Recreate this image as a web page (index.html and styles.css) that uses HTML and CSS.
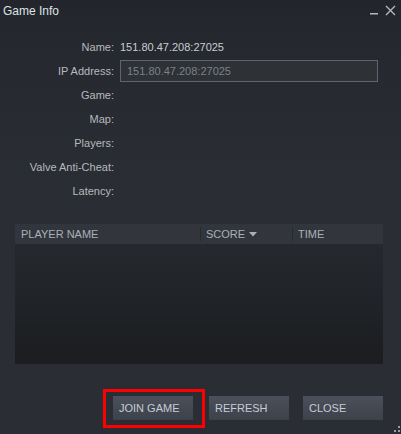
FILE: index.html
```html
<!DOCTYPE html>
<html>
<head>
<meta charset="utf-8">
<link rel="stylesheet" href="styles.css">
</head>
<body>
<div class="window">
  <div class="titlebar">
    <span class="title">Game Info</span>
    <div class="controls">
      <svg class="ctl" width="10" height="10" viewBox="0 0 10 10"><rect x="1" y="8" width="8" height="1.5" fill="#b4b8bc"/></svg>
      <svg class="ctl" width="11" height="11" viewBox="0 0 11 11"><path d="M1 1 L10 10 M10 1 L1 10" stroke="#b4b8bc" stroke-width="1.4"/></svg>
    </div>
  </div>
  <div class="info">
    <div class="label">Name:</div><div class="value">151.80.47.208:27025</div>
    <div class="label">IP Address:</div><div class="value"><div class="input">151.80.47.208:27025</div></div>
    <div class="label">Game:</div><div class="value"></div>
    <div class="label">Map:</div><div class="value"></div>
    <div class="label">Players:</div><div class="value"></div>
    <div class="label">Valve Anti-Cheat:</div><div class="value"></div>
    <div class="label">Latency:</div><div class="value"></div>
  </div>
  <div class="table">
    <div class="thead">
      <div class="th c1">PLAYER NAME</div>
      <div class="th c2">SCORE <svg class="arrow" width="8" height="5" viewBox="0 0 8 5"><path d="M0 0 L8 0 L4 4.5 Z" fill="#a9b0b8"/></svg></div>
      <div class="th c3">TIME</div>
    </div>
    <div class="tbody"></div>
  </div>
  <div class="buttons">
    <div class="btn join">JOIN GAME<div class="highlight"></div></div>
    <div class="btn refresh">REFRESH</div>
    <div class="btn close">CLOSE</div>
  </div>
  <div class="grip"><i class="d1"></i><i class="d2"></i><i class="d3"></i></div>
</div>
</body>
</html>
```
FILE: styles.css
```css
html, body {
  margin: 0;
  padding: 0;
}
body {
  width: 401px;
  height: 434px;
  overflow: hidden;
  font-family: Arial, "Liberation Sans", sans-serif;
  background: #2a2d33;
}
.window {
  position: relative;
  width: 401px;
  height: 434px;
  background: linear-gradient(#22252b 0px, #262930 60px, #2a2d33 180px, #2a2d33 100%);
}
.titlebar {
  height: 22px;
  display: flex;
  align-items: center;
  justify-content: space-between;
  padding: 0 5px 0 3px;
}
.title {
  color: #dfe3e7;
  font-size: 12px;
  margin-top: 0px;
}
.controls {
  display: flex;
  align-items: center;
  gap: 6px;
  margin-top: -2px;
}
.info {
  margin-top: 13px;
  display: grid;
  grid-template-columns: 114px 258px;
  column-gap: 6px;
  grid-auto-rows: 24px;
  font-size: 11px;
}
.label {
  text-align: right;
  color: #b6babe;
  line-height: 24px;
}
.value {
  color: #c8ccd0;
  line-height: 24px;
  display: flex;
  align-items: center;
}
.input {
  box-sizing: border-box;
  width: 258px;
  height: 22px;
  border: 1px solid #5e6470;
  background: #2e3136;
  color: #7c8187;
  line-height: 20px;
  padding-left: 6px;
  font-size: 11px;
}
.table {
  margin: 21px 0 0 15px;
  width: 368px;
}
.thead {
  height: 20px;
  background: #32363c;
  display: flex;
  align-items: center;
  font-size: 11px;
  color: #a9b0b8;
}
.th {
  box-sizing: border-box;
  height: 14px;
  line-height: 14px;
  padding-left: 6px;
  display: flex;
  align-items: center;
}
.c1 { width: 185px; }
.c2 { width: 92px; border-left: 1px solid #262a2f; padding-left: 5px; }
.c3 { flex: 1; border-left: 1px solid #262a2f; padding-left: 5px; }
.arrow { margin-left: 4px; margin-top: 1px; }
.tbody {
  height: 120px;
  background: linear-gradient(#25282d 0%, #202327 50%, #1b1d20 100%);
}
.buttons {
  margin-top: 32px;
  display: flex;
  padding-left: 113px;
}
.btn {
  position: relative;
  box-sizing: border-box;
  width: 80px;
  height: 24px;
  line-height: 24px;
  padding-left: 6px;
  font-size: 11px;
  color: #c4cdd8;
  background: linear-gradient(#4b505a 0%, #3d414a 100%);
}
.refresh { margin-left: 16px; }
.close { margin-left: 14px; }
.highlight {
  position: absolute;
  left: -10px;
  top: -7px;
  width: 96px;
  height: 33px;
  border: 3px solid #ff0000;
}
.grip {
  position: absolute;
  right: 0;
  bottom: 0;
  width: 8px;
  height: 9px;
}
.grip i {
  position: absolute;
  width: 2px;
  height: 2px;
  background: #9a9ea3;
}
.grip .d1 { left: 1px; top: 5px; }
.grip .d2 { left: 5px; top: 1px; }
.grip .d3 { left: 5px; top: 5px; }
```
